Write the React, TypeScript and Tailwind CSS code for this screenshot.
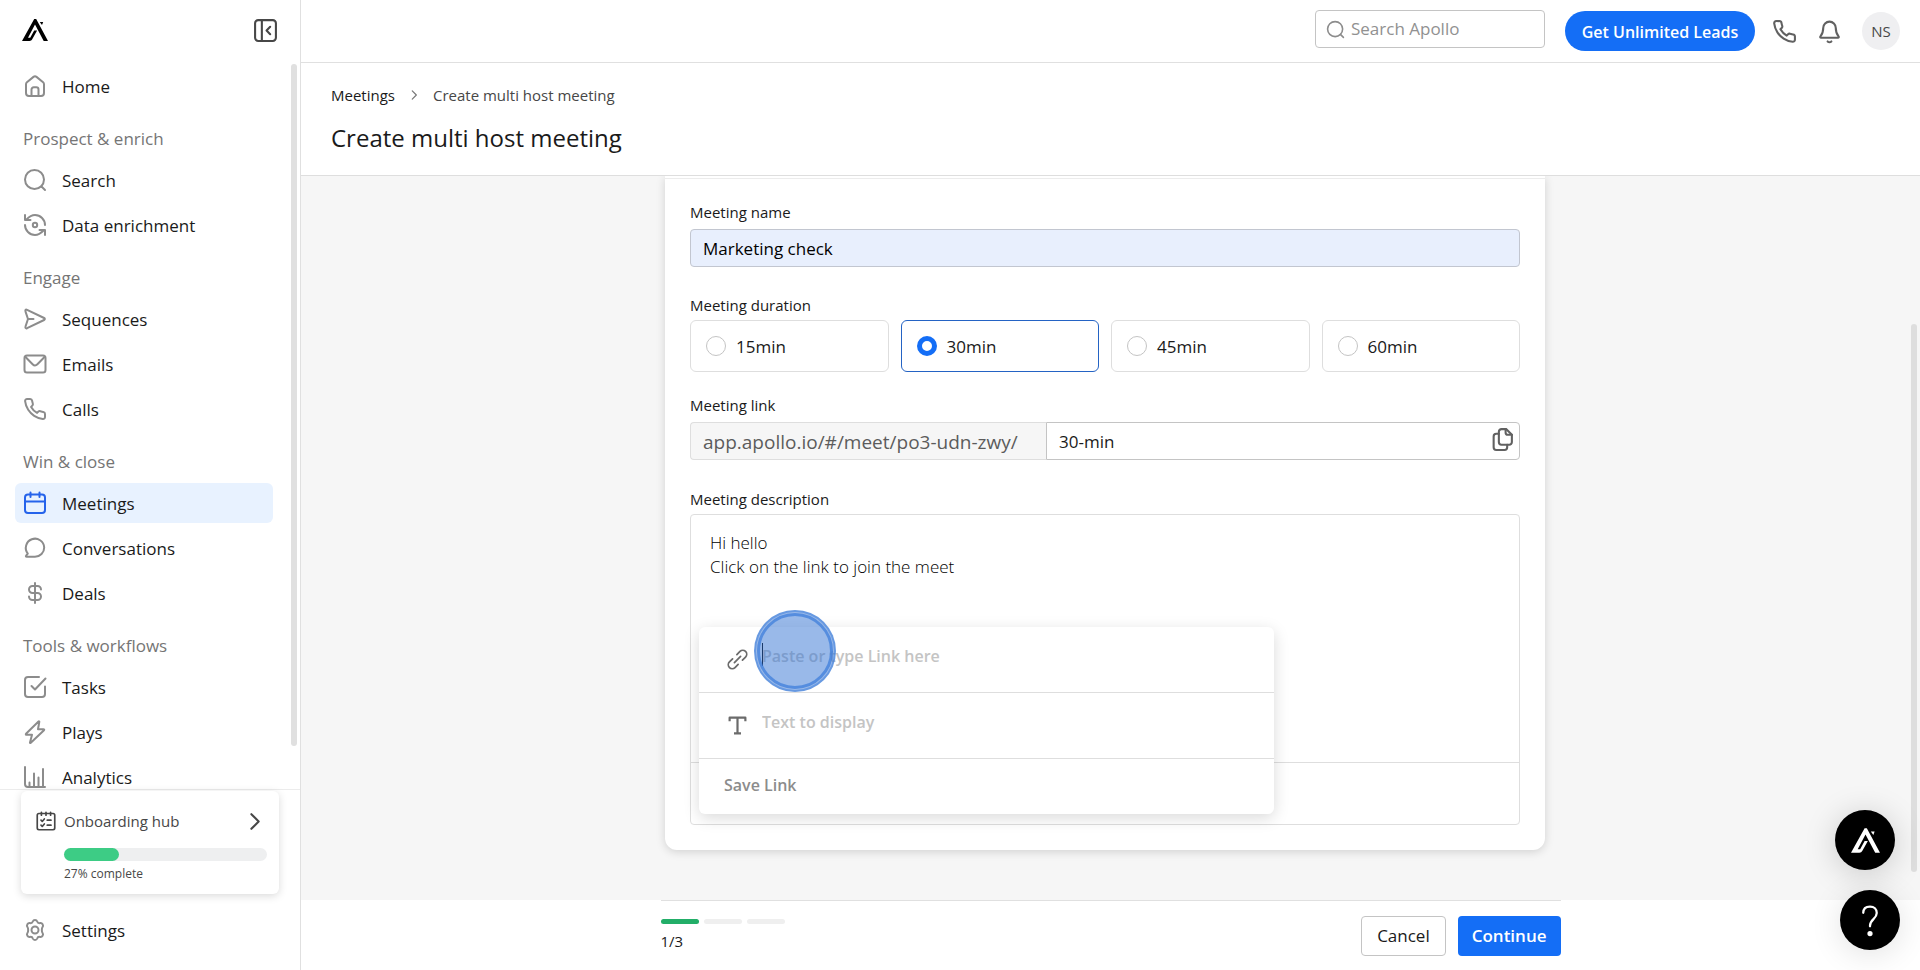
import { useState } from "react";
import type { ReactNode, SVGProps } from "react";

function Icon({ size = 25, strokeWidth = 2, children, ...rest }: { size?: number; strokeWidth?: number; children: ReactNode } & SVGProps<SVGSVGElement>) {
  return (
    <svg
      width={size}
      height={size}
      viewBox="0 0 24 24"
      fill="none"
      stroke="currentColor"
      strokeWidth={strokeWidth}
      strokeLinecap="round"
      strokeLinejoin="round"
      aria-hidden="true"
      className="shrink-0"
      {...rest}
    >
      {children}
    </svg>
  );
}

const icons: Record<string, ReactNode> = {
  home: (
    <>
      <path d="M3 10.2c0-.8.3-1.5.9-2l6.6-5.3a2.4 2.4 0 0 1 3 0l6.6 5.3c.6.5.9 1.2.9 2V19a3 3 0 0 1-3 3H6a3 3 0 0 1-3-3z" />
      <path d="M8.500 22v-6.500a2.200 2.200 0 0 1 2.200-2.200h2.600a2.200 2.200 0 0 1 2.200 2.200V22" />
    </>
  ),
  search: (
    <>
      <circle cx="11.500" cy="11.500" r="9.500" />
      <path d="m18.500 18.500 3.500 3.500" />
    </>
  ),
  enrich: (
    <>
      <circle cx="12" cy="12" r="2.200" />
      <path d="M2 12c0 5.500 4.500 10 10 10 3.300 0 5.500-1.300 8.500-4.500M22 22v-5h-5.500" />
      <path d="M22 12c0-5.500-4.500-10-10-10-3.300 0-5.500 1.300-8.500 4.500M2 2v5h5.500" />
    </>
  ),
  send: (
    <path d="M10.5 12H5m-.1.300L2.600 19.200c-.5 1.600 0 2.600 1.500 2l17-8.200c1-.5 1-1.500 0-2l-17-8.200c-1.500-.7-2.100.3-1.500 2l2.300 6.900a1 1 0 0 1 0 .6z" />
  ),
  mail: (
    <>
      <rect x="1.500" y="3.500" width="21" height="17" rx="2.500" />
      <path d="m2.500 5 7.100 7.200c1.600 1.600 3.200 1.600 4.800 0L21.500 5" />
    </>
  ),
  phone: (
    <path d="M22 16.900v3a2 2 0 0 1-2.200 2 19.800 19.800 0 0 1-8.600-3.100 19.500 19.500 0 0 1-6-6 19.800 19.800 0 0 1-3.100-8.600A2 2 0 0 1 4.100 2h3a2 2 0 0 1 2 1.700c.1 1 .4 1.900.7 2.800a2 2 0 0 1-.5 2.100L8.100 9.900a16 16 0 0 0 6 6l1.300-1.300a2 2 0 0 1 2.100-.4c.9.3 1.800.6 2.800.7A2 2 0 0 1 22 16.900z" />
  ),
  calendar: (
    <>
      <rect x="2" y="3.500" width="20" height="18.500" rx="3" />
      <path d="M2 10.500h20M7.500 1.500V6M16.500 1.500V6" />
    </>
  ),
  chat: <path d="M21.200 11.500a9.200 9.200 0 0 1-9.200 9.300H3.600c-.7 0-.9-.8-.5-1.200l1.700-2a9.200 9.200 0 1 1 16.400-6.100z" />,
  dollar: <path d="M6 15.500c0 2 1.600 3.500 3.500 3.500h5a3.500 3.500 0 0 0 0-7h-5a3.500 3.500 0 0 1 0-7h5C16.400 5 18 6.500 18 8.500M12 2v20" />,
  task: (
    <>
      <path d="M16 2H5a3 3 0 0 0-3 3v14a3 3 0 0 0 3 3h14a3 3 0 0 0 3-3v-7.500" />
      <path d="m8.500 11 3.500 3.500L22.500 3.500" />
    </>
  ),
  bolt: <path d="M15.500 1.500 3 13.800c-.4.500-.1 1 .5 1H9l-2 7.700c-.1.500.4.700.8.300L21 10.200c.4-.5.1-1-.5-1H15l1.300-7.300c.1-.5-.4-.8-.8-.4z" />,
  chart: <path d="M2 2v17a3 3 0 0 0 3 3h17M6.500 22v-4.500M11 22V8.500M15.500 22v-9.500M20 22V4" />,
  gear: (
    <>
      <circle cx="12" cy="12" r="3.500" />
      <path d="M9.800 3.500C10.200 2.400 10.900 2 12 2s1.800.4 2.200 1.500c.4 1.200 1.600 1.800 2.800 1.600 1.200-.2 2 .1 2.600 1.100.7 1.200.7 2-.1 2.900-.9 1-.9 4.800 0 5.800.8.900.8 1.700.1 2.900-.6 1-1.400 1.300-2.600 1.100-1.200-.2-2.400.4-2.800 1.600-.4 1.100-1.100 1.500-2.200 1.500s-1.800-.4-2.200-1.500c-.4-1.200-1.600-1.800-2.800-1.600-1.200.2-2-.1-2.600-1.100-.7-1.200-.7-2 .1-2.900.9-1 .9-4.800 0-5.800-.8-.9-.8-1.700-.1-2.900.6-1 1.400-1.300 2.600-1.100 1.200.2 2.400-.4 2.800-1.600z" />
    </>
  ),
  bell: (
    <>
      <path d="M6 8.500a6 6 0 0 1 12 0c0 4.500 1.200 6.500 2.700 8.200.5.600.2 1.300-.6 1.300H3.900c-.8 0-1.100-.7-.6-1.300C4.800 15 6 13 6 8.500z" />
      <path d="M10.200 21.500c.5.500 1.100.8 1.800.8s1.300-.3 1.800-.8" />
    </>
  ),
  collapse: (
    <>
      <rect x="2" y="2" width="20" height="20" rx="3" />
      <path d="M8.500 2v20M16.500 8.500 13 12l3.500 3.500" />
    </>
  ),
  hub: (
    <>
      <rect x="1.500" y="3" width="21" height="19.500" rx="2" />
      <path d="M6.500 1.500V5M12 1.500V5M17.500 1.500V5M6 11l1.500 1.500L10 9.500M6 17l1.500 1.500L10 15.500M13.500 11H18M13.500 17H18" />
    </>
  ),
  copy: (
    <>
      <path d="M15.500 2H11a2.500 2.500 0 0 0-2.500 2.500v10A2.500 2.500 0 0 0 11 17h7.500a2.500 2.500 0 0 0 2.500-2.500V7.500z" />
      <path d="M15 2v3.500a2 2 0 0 0 2 2h4M8.500 6.500H6A2.500 2.500 0 0 0 3.500 9v10.500A2.500 2.500 0 0 0 6 22h8a2.500 2.500 0 0 0 2.500-2.500V17" />
    </>
  ),
  link: (
    <g transform="rotate(-45 12 12)">
      <path d="M8.500 16.500H3.500a4.500 4.500 0 0 1 0-9h5M15.500 7.500h5a4.500 4.500 0 0 1 0 9h-5M7 12h10" />
    </g>
  ),
  type: <path d="M3 7V3h18v4M12 3v18M8 21h8" strokeLinecap="butt" />,
  chevron: <path d="m9 5 7 7-7 7" />,
};

function Logo({ className }: { className: string }) {
  return (
    <svg viewBox="0 0 26 22" className={className} fill="currentColor" aria-label="Apollo">
      <path d="M12.200 0h2L26 22h-4.300L13 5.600 6 18.800h2.200l4-7.300h2.900L10.200 20.300c-.6 1.100-1.500 1.700-2.700 1.700H0z" />
      <path d="M17.800 3h3.400L20 6z" />
    </svg>
  );
}

const home = [{ label: "Home", icon: "home" }];

const sections = [
  {
    title: "Prospect & enrich",
    items: [
      { label: "Search", icon: "search" },
      { label: "Data enrichment", icon: "enrich" },
    ],
  },
  {
    title: "Engage",
    items: [
      { label: "Sequences", icon: "send" },
      { label: "Emails", icon: "mail" },
      { label: "Calls", icon: "phone" },
    ],
  },
  {
    title: "Win & close",
    items: [
      { label: "Meetings", icon: "calendar" },
      { label: "Conversations", icon: "chat" },
      { label: "Deals", icon: "dollar" },
    ],
  },
  {
    title: "Tools & workflows",
    items: [
      { label: "Tasks", icon: "task" },
      { label: "Plays", icon: "bolt" },
      { label: "Analytics", icon: "chart" },
    ],
  },
];

const durations = ["15min", "30min", "45min", "60min"];

function NavItems({ items }: { items: { label: string; icon: string }[] }) {
  return (
    <ul className="flex flex-col gap-[5px]">
      {items.map((item) => {
        const active = item.label === "Meetings";
        return (
          <li key={item.label}>
            <a
              href="#"
              className={`flex h-10 items-center gap-[15px] rounded-md px-2 font-medium ${active ? "bg-[#e8f2ff]" : "hover:bg-gray-50"}`}
            >
              <Icon size={24} className={`shrink-0 ${active ? "text-[#2563eb]" : "text-[#8c8c8c]"}`}>
                {icons[item.icon]}
              </Icon>
              <span className="pt-px">{item.label}</span>
            </a>
          </li>
        );
      })}
    </ul>
  );
}

function Sidebar() {
  return (
    <aside className="flex w-[301px] shrink-0 flex-col border-r border-[#e0e0e0] bg-white">
      <div className="flex h-[62px] shrink-0 items-center justify-between pb-[2px] pl-[22px] pr-[22px]">
        <a href="#">
          <Logo className="h-[22px] w-[26px] text-black" />
        </a>
        <button aria-label="Collapse sidebar" className="text-[#474747]">
          <Icon>{icons.collapse}</Icon>
        </button>
      </div>

      <div className="flex min-h-0 flex-1">
        <nav className="flex-1 overflow-hidden pl-[15px] pr-[18px] pt-1">
          <NavItems items={home} />
          {sections.map((section) => (
            <div key={section.title}>
              <h2 className="px-2 pb-2 pt-5 leading-[26px] font-medium text-[#757575]">{section.title}</h2>
              <NavItems items={section.items} />
            </div>
          ))}
        </nav>
        <div className="w-[9px] pt-[2px]">
          <div className="h-[94%] w-[6px] rounded-full bg-[#e0e0e0]" />
        </div>
      </div>

      <div className="border-t border-[#ececec] pb-5 pl-[15px] pr-[21px] pt-px">
        <a href="#" className="ml-[6px] block rounded-md bg-white pb-3 pl-[15px] pr-3 pt-[15px] text-[#474747] shadow-[0_2px_8px_rgba(0,0,0,0.15)]">
          <span className="flex items-center gap-2 text-[15px] leading-[30px]">
            <Icon size={20}>{icons.hub}</Icon>
            <span className="flex-1">Onboarding hub</span>
            <Icon>{icons.chevron}</Icon>
          </span>
          <span className="ml-7 mt-3 block h-[13px] rounded-full bg-[#eeeff0]">
            <span className="block h-full w-[27%] rounded-full bg-[#3dcc85]" />
          </span>
          <span className="ml-7 mt-[5px] block text-[12px] leading-4">27% complete</span>
        </a>
        <div className="mt-4">
          <NavItems items={[{ label: "Settings", icon: "gear" }]} />
        </div>
      </div>
    </aside>
  );
}

function Topbar() {
  return (
    <header className="flex h-[63px] shrink-0 items-center justify-end border-b border-[#e0e0e0] bg-white pr-5">
      <label className="mb-1 mr-5 flex h-[38px] w-[230px] items-center gap-[6px] rounded border border-[#c4c4c4] px-[10px] text-[#8c8c8c]">
        <Icon size={19}>{icons.search}</Icon>
        <input
          type="search"
          aria-label="Search Apollo"
          placeholder="Search Apollo"
          className="min-w-0 flex-1 font-medium outline-none placeholder:text-[#919191]"
        />
      </label>
      <button className="h-10 w-[190px] whitespace-nowrap rounded-full bg-[#146ef6] pt-px text-[16px] font-semibold text-white">
        Get Unlimited Leads
      </button>
      <button aria-label="Calls" className="ml-[17px] text-[#616161]">
        <Icon>{icons.phone}</Icon>
      </button>
      <button aria-label="Notifications" className="ml-5 text-[#616161]">
        <Icon>{icons.bell}</Icon>
      </button>
      <button className="ml-5 size-[38px] rounded-full bg-[#efeff1] text-[15px] text-[#474747]">NS</button>
    </header>
  );
}

function LinkPopup() {
  return (
    <div className="absolute left-2 top-[112px] w-[575px] rounded-md bg-white text-[16px] shadow-[0_4px_16px_rgba(0,0,0,0.15)]">
      <label className="relative flex h-[66px] items-center gap-[14px] border-b border-[#dedede] pl-7 text-[#6b6b6b]">
        <Icon size={21}>{icons.link}</Icon>
        <input
          aria-label="Link"
          placeholder="Paste or type Link here"
          className="mb-2 min-w-0 flex-1 font-semibold outline-none placeholder:text-[#c4c4c4]"
        />
        <span className="absolute left-[63px] top-4 h-[23px] w-px bg-black" />
        {/* click marker */}
        <span className="pointer-events-none absolute left-[55px] top-[-17px] size-[82px] rounded-full border-2 border-[#3f7fdb]/55 bg-[#3474d4]/50 p-px">
          <span className="block size-full rounded-full border-[3px] border-[#3f7fdb]/75" />
        </span>
      </label>
      <label className="flex h-[66px] items-center gap-[14px] border-b border-[#dedede] pl-7 text-[#6b6b6b]">
        <Icon size={21} strokeWidth={2.5}>{icons.type}</Icon>
        <input
          aria-label="Text to display"
          placeholder="Text to display"
          className="mb-2 min-w-0 flex-1 font-semibold outline-none placeholder:text-[#c4c4c4]"
        />
      </label>
      <button type="button" className="block h-[55px] px-[25px] pb-1 font-semibold text-[#8c8c8c]">
        Save Link
      </button>
    </div>
  );
}

function MeetingForm() {
  const [duration, setDuration] = useState("30min");

  return (
    <form className="mx-auto w-full max-w-[880px] rounded-b-xl bg-white pt-[2px] shadow-[0_2px_10px_rgba(0,0,0,0.15)]">
      <div className="border-t border-[#ececec] px-[25px] pb-[25px] pt-[23px]">
        <label htmlFor="name" className="block text-[15px] leading-[20px]">
          Meeting name
        </label>
        <input
          id="name"
          defaultValue="Marketing check"
          className="mt-[7px] block h-[38px] w-full rounded border border-[#c2c6d0] bg-[#e8effd] px-3 font-medium text-black"
        />

        <fieldset className="mt-7">
          <legend className="text-[15px] leading-[20px]">Meeting duration</legend>
          <div className="mt-[5px] grid grid-cols-4 gap-3">
            {durations.map((d) => (
              <label
                key={d}
                className={`flex h-[52px] items-center gap-[10px] rounded-md border px-[15px] font-medium ${
                  d === duration ? "border-[#2463c4]" : "border-[#dedede]"
                }`}
              >
                <input
                  type="radio"
                  name="duration"
                  checked={d === duration}
                  onChange={() => setDuration(d)}
                  className="size-5 appearance-none rounded-full border border-[#c4c4c4] bg-white checked:border-[5px] checked:border-[#146ef6]"
                />
                <span className="pt-px">{d}</span>
              </label>
            ))}
          </div>
        </fieldset>

        <label htmlFor="link" className="mt-[23px] block text-[15px] leading-[20px]">
          Meeting link
        </label>
        <div className="mt-[7px] flex h-[38px]">
          <span className="flex w-[356px] items-center rounded-l border border-r-0 border-[#dedede] bg-[#f6f6f6] px-3 pt-[2px] text-[19px] text-[#5c5c5c]">
            app.apollo.io/#/meet/po3-udn-zwy/
          </span>
          <span className="flex flex-1 items-center rounded-r border border-[#c4c4c4] pl-3 pr-1">
            <input id="link" defaultValue="30-min" className="min-w-0 flex-1 pt-px font-medium outline-none" />
            <button type="button" aria-label="Copy link" className="mb-1 text-[#616161]">
              <Icon>{icons.copy}</Icon>
            </button>
          </span>
        </div>

        <label htmlFor="description" className="mt-[29px] block text-[15px] leading-[20px]">
          Meeting description
        </label>
        <div className="relative mt-[5px] rounded-sm border border-[#dedede]">
          <textarea
            id="description"
            defaultValue={"Hi hello\nClick on the link to join the meet"}
            className="block h-[247px] w-full resize-none px-[19px] py-4 leading-6 font-light text-black outline-none"
          />
          <div className="h-[62px] border-t border-[#dedede]" />
          <LinkPopup />
        </div>
      </div>
    </form>
  );
}

function Footer() {
  return (
    <footer className="shrink-0 bg-white">
      <div className="mx-auto flex h-[70px] w-full max-w-[900px] items-start justify-between border-t border-[#e0e0e0]">
        <div className="pt-[18px]">
          <div className="flex gap-[5px]">
            <span className="h-[5px] w-[38px] rounded-full bg-[#22ae68]" />
            <span className="h-[5px] w-[38px] rounded-full bg-[#efefef]" />
            <span className="h-[5px] w-[38px] rounded-full bg-[#efefef]" />
          </div>
          <p className="mt-[7px] text-[15px] leading-[20px]">1/3</p>
        </div>
        <div className="flex gap-3 pt-[15px]">
          <button className="h-10 rounded border border-[#c4c4c4] px-[15px] font-medium">Cancel</button>
          <button className="h-10 rounded bg-[#146ef6] px-[14px] font-semibold text-white">Continue</button>
        </div>
      </div>
    </footer>
  );
}

export default function App() {
  return (
    <div className="flex h-screen overflow-hidden bg-white font-['Open_Sans','Noto_Sans',sans-serif] text-[17px] text-[#1a1a1a]">
      <Sidebar />
      <div className="flex min-w-0 flex-1 flex-col">
        <Topbar />
        <div className="shrink-0 border-b border-[#dedede] px-[30px] pb-5 pt-[22px]">
          <div className="flex items-center gap-3 text-[15px] leading-[20px]">
            <a href="#">Meetings</a>
            <Icon size={14} className="text-[#757575]">{icons.chevron}</Icon>
            <span className="text-[#474747]">Create multi host meeting</span>
          </div>
          <h1 className="mt-4 text-[24px] leading-[34px] font-medium">Create multi host meeting</h1>
        </div>
        <main className="flex min-h-0 flex-1 overflow-hidden bg-[#f6f6f6]">
          <div className="flex-1">
            <MeetingForm />
          </div>
          <div className="w-[11px] pl-[2px] pt-[148px]">
            <div className="h-[548px] w-[6px] rounded-full bg-[#dedede]" />
          </div>
        </main>
        <Footer />
      </div>

      <button aria-label="Apollo assistant" className="fixed bottom-[100px] right-[25px] flex size-[60px] items-center justify-center rounded-full bg-black text-white shadow-[0_4px_32px_rgba(0,0,0,0.18)]">
        <Logo className="h-[25px] w-[29px]" />
      </button>
      <button aria-label="Help" className="fixed bottom-5 right-5 flex size-[60px] items-center justify-center rounded-full bg-black text-white shadow-[0_4px_32px_rgba(0,0,0,0.12)]">
        <Icon size={36} strokeWidth={1.5}>
          <path d="M7.500 7.200c0-2.700 1.800-4.200 4.500-4.200s4.500 1.600 4.500 4.300c0 4-4.500 4.200-4.500 8.500v.4" />
          <circle cx="12" cy="21" r="1" fill="currentColor" />
        </Icon>
      </button>
    </div>
  );
}
